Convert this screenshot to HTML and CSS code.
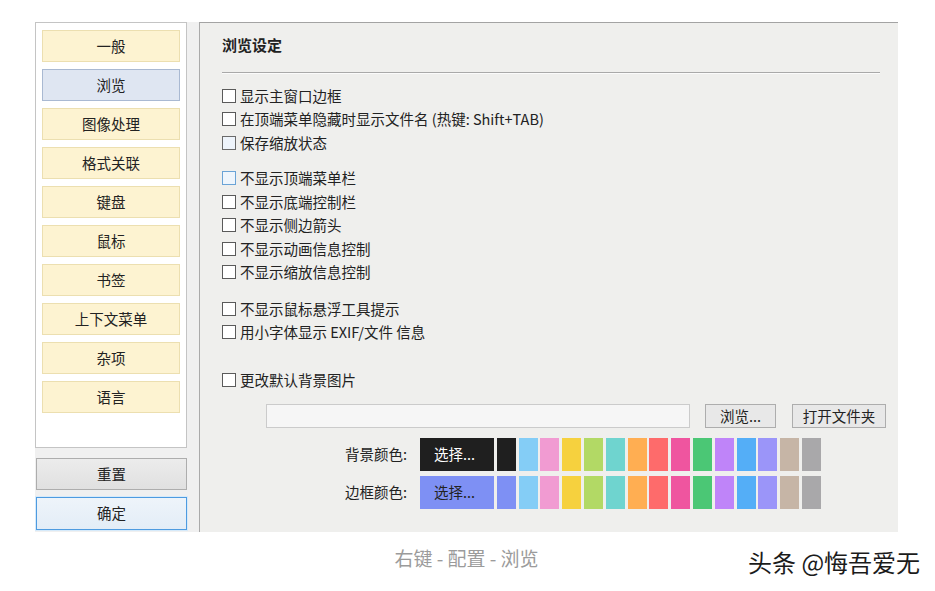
FILE: index.html
```html
<!DOCTYPE html>
<html lang="zh">
<head>
<meta charset="utf-8">
<title>浏览设定</title>
<link rel="stylesheet" href="styles.css">
</head>
<body>
<div class="page">
  <div class="window">
    <div class="left">
      <div class="navlist">
        <div class="nav">一般</div>
        <div class="nav active">浏览</div>
        <div class="nav">图像处理</div>
        <div class="nav">格式关联</div>
        <div class="nav">键盘</div>
        <div class="nav">鼠标</div>
        <div class="nav">书签</div>
        <div class="nav">上下文菜单</div>
        <div class="nav">杂项</div>
        <div class="nav">语言</div>
      </div>
      <div class="actions">
        <div class="btn">重置</div>
        <div class="btn primary">确定</div>
      </div>
    </div>
    <div class="panel">
      <div class="title">浏览设定</div>
      <div class="sep"></div>
      <div class="group g1">
        <div class="row"><span class="cb"></span>显示主窗口边框</div>
        <div class="row"><span class="cb"></span>在顶端菜单隐藏时显示文件名 (热键: Shift+TAB)</div>
        <div class="row"><span class="cb light"></span>保存缩放状态</div>
      </div>
      <div class="group g2">
        <div class="row"><span class="cb hover"></span>不显示顶端菜单栏</div>
        <div class="row"><span class="cb"></span>不显示底端控制栏</div>
        <div class="row"><span class="cb"></span>不显示侧边箭头</div>
        <div class="row"><span class="cb"></span>不显示动画信息控制</div>
        <div class="row"><span class="cb"></span>不显示缩放信息控制</div>
      </div>
      <div class="group g3">
        <div class="row"><span class="cb"></span>不显示鼠标悬浮工具提示</div>
        <div class="row"><span class="cb"></span>用小字体显示 EXIF/文件 信息</div>
      </div>
      <div class="group g4">
        <div class="row"><span class="cb"></span>更改默认背景图片</div>
      </div>
      <div class="filerow">
        <div class="input"></div>
        <div class="sbtn browse">浏览...</div>
        <div class="sbtn open">打开文件夹</div>
      </div>
      <div class="colors">
        <div class="crow">
          <div class="clabel">背景颜色:</div>
          <div class="pick dark">选择...</div>
          <span class="sw c-black"></span>
          <span class="sw c-lblue"></span>
          <span class="sw c-pink"></span>
          <span class="sw c-yellow"></span>
          <span class="sw c-lime"></span>
          <span class="sw c-teal"></span>
          <span class="sw c-orange"></span>
          <span class="sw c-red"></span>
          <span class="sw c-magenta"></span>
          <span class="sw c-green"></span>
          <span class="sw c-purple"></span>
          <span class="sw c-blue"></span>
          <span class="sw c-peri"></span>
          <span class="sw c-tan"></span>
          <span class="sw c-gray"></span>
        </div>
        <div class="crow">
          <div class="clabel">边框颜色:</div>
          <div class="pick violet">选择...</div>
          <span class="sw c-violet"></span>
          <span class="sw c-lblue"></span>
          <span class="sw c-pink"></span>
          <span class="sw c-yellow"></span>
          <span class="sw c-lime"></span>
          <span class="sw c-teal"></span>
          <span class="sw c-orange"></span>
          <span class="sw c-red"></span>
          <span class="sw c-magenta"></span>
          <span class="sw c-green"></span>
          <span class="sw c-purple"></span>
          <span class="sw c-blue"></span>
          <span class="sw c-peri"></span>
          <span class="sw c-tan"></span>
          <span class="sw c-gray"></span>
        </div>
      </div>
    </div>
  </div>
  <div class="caption">右键 - 配置 - 浏览</div>
  <div class="watermark">头条 @悔吾爱无</div>
</div>
</body>
</html>
```

FILE: styles.css
```css
* { box-sizing: border-box; }
html, body { margin: 0; padding: 0; background: #ffffff; }
body {
  font-family: "Noto Sans CJK SC", "Noto Sans", sans-serif;
  color: #222;
  font-size: 14.5px;
}
.page { position: relative; width: 935px; height: 591px; padding-top: 22px; }

.window {
  margin-left: 35px;
  width: 863px;
  height: 510px;
  display: flex;
  background: #f0f0f0;
}

.left { flex: none; width: 152px; display: flex; flex-direction: column; }
.navlist {
  height: 426px;
  background: #ffffff;
  border: 1px solid #c4c4c4;
  padding: 7px 6px;
  display: flex;
  flex-direction: column;
  gap: 7px;
}
.nav {
  height: 32px;
  background: #fdf3d1;
  border: 1px solid #ecdfb0;
  display: flex;
  align-items: center;
  justify-content: center;
  line-height: 1;
}
.nav.active { background: #dfe6f2; border-color: #a9b9d2; }

.actions {
  margin-top: 10px;
  margin-left: 1px;
  display: flex;
  flex-direction: column;
  gap: 7px;
}
.btn {
  height: 32px;
  background: linear-gradient(#ececec, #e0e0e0);
  border: 1px solid #adadad;
  display: flex;
  align-items: center;
  justify-content: center;
  line-height: 1;
}
.btn.primary {
  height: 33px;
  border-color: #4e9be0;
  background: linear-gradient(#eef4fa, #e3edf7);
  box-shadow: 0 0 0 1px #d6eafa;
}

.panel {
  margin-left: 12px;
  flex: 1;
  min-width: 0;
  background: #efefed;
  border-left: 1px solid #aaaaaa;
  border-top: 1px solid #a3a3a3;
  padding: 12px 12px 0 22px;
}
.title { height: 20px; line-height: 20px; font-weight: 700; font-size: 15px; }
.sep {
  margin-top: 17px;
  margin-right: 6px;
  height: 2px;
  border-top: 1px solid #a9a9a9;
  border-bottom: 1px solid #fbfbfb;
}
.group { display: flex; flex-direction: column; }
.g1 { margin-top: 10px; }
.g2 { margin-top: 12px; }
.g3 { margin-top: 13px; }
.g4 { margin-top: 24px; }
.row {
  height: 23.5px;
  display: flex;
  align-items: center;
  white-space: nowrap;
  line-height: 1;
}
.cb {
  width: 14px;
  height: 14px;
  border: 1px solid #5a5a5a;
  background: #ffffff;
  margin-right: 4px;
  flex: none;
}
.cb.light { background: #eef4fb; border-color: #6a6a6a; }
.cb.hover { border-color: #6aa3d6; background: #eef5fc; }

.filerow {
  margin-top: 12.5px;
  margin-left: 44px;
  display: flex;
  height: 24px;
}
.input {
  flex: none;
  width: 424px;
  height: 24px;
  background: #f6f6f6;
  border: 1px solid #cbcbcb;
}
.sbtn {
  flex: none;
  height: 24px;
  background: #e8e8e8;
  border: 1px solid #adadad;
  display: flex;
  align-items: center;
  justify-content: center;
  line-height: 1;
}
.browse { width: 71px; margin-left: 15px; }
.open { width: 94px; margin-left: 16px; }

.colors { margin-top: 10px; display: flex; flex-direction: column; gap: 5px; }
.crow { display: flex; align-items: stretch; height: 33px; gap: 2.8px; }
.clabel {
  flex: none;
  width: 185px;
  margin-right: 10.2px;
  display: flex;
  align-items: center;
  justify-content: flex-end;
  line-height: 1;
}
.pick {
  flex: none;
  width: 74px;
  display: flex;
  align-items: center;
  padding-left: 14px;
  line-height: 1;
}
.pick.dark { background: #1f1f1f; color: #ffffff; }
.pick.violet { background: #7e90f4; color: #222; }
.sw { flex: none; width: 19px; }
.c-black { background: #1f1f1f; }
.c-violet { background: #7e90f4; }
.c-lblue { background: #84cdf6; }
.c-pink { background: #f19bd2; }
.c-yellow { background: #f6d13e; }
.c-lime { background: #b2d965; }
.c-teal { background: #6fd4cf; }
.c-orange { background: #ffae52; }
.c-red { background: #fe6b6b; }
.c-magenta { background: #ef559f; }
.c-green { background: #4bc775; }
.c-purple { background: #bf84f9; }
.c-blue { background: #54aef7; }
.c-peri { background: #9b95f9; }
.c-tan { background: #c6b5a6; }
.c-gray { background: #a9a8aa; }

.caption {
  margin-left: 35px;
  width: 863px;
  margin-top: 14px;
  text-align: center;
  color: #9b9b9b;
  font-size: 19px;
  line-height: 24px;
}
.watermark {
  position: absolute;
  left: 748px;
  top: 548px;
  font-size: 24px;
  line-height: 28px;
  color: #1b1b1b;
  text-shadow: 1px 1px 0 #ffffff, -1px -1px 0 #ffffff;
  white-space: nowrap;
}
```
